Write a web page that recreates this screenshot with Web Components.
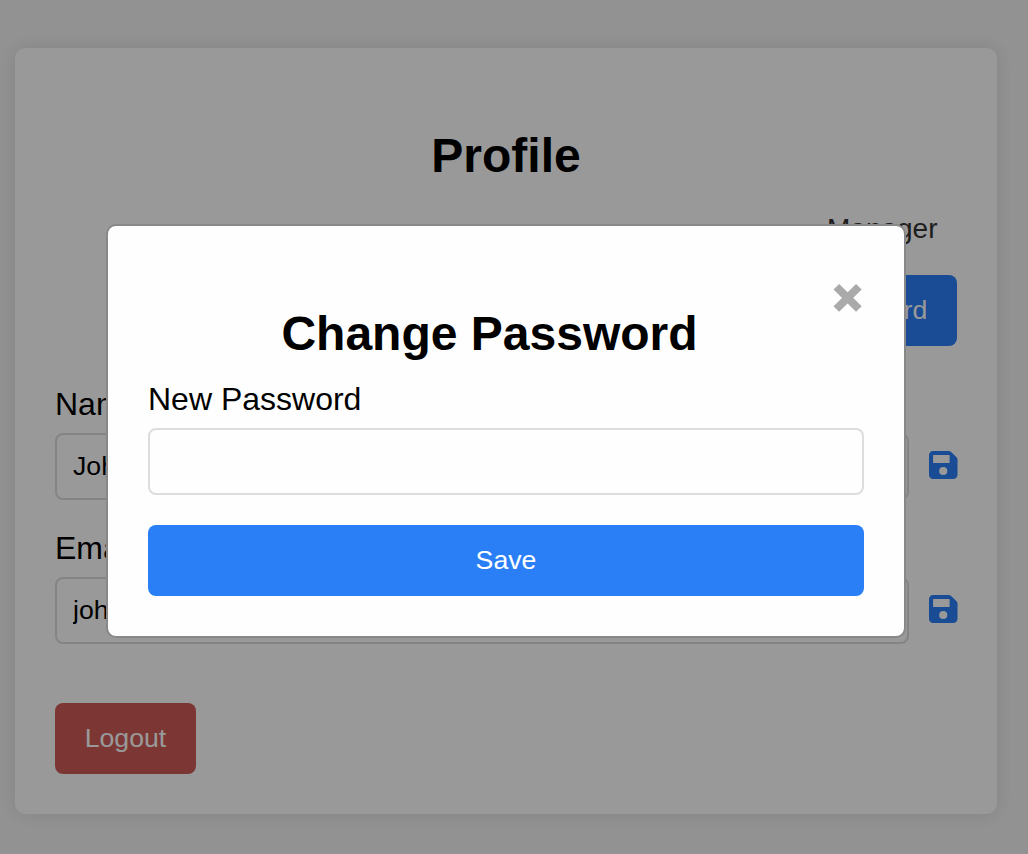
<!DOCTYPE html>
<html lang="en">
<head>
<meta charset="utf-8">
<title>Profile</title>
<style>
html, body { margin: 0; height: 100%; overflow: hidden; }
body { background: #f4f4f4; font-family: "Liberation Sans", Arial, sans-serif; color: #000; }
</style>
</head>
<body>
<profile-card heading="Profile" role-name="Manager">
  <action-button slot="tools">Change Password</action-button>
  <edit-field label="Name" value="John" savable></edit-field>
  <edit-field label="Email" value="john@example.com" savable></edit-field>
  <action-button slot="footer" kind="danger">Logout</action-button>
</profile-card>
<modal-dialog heading="Change Password">
  <edit-field label="New Password" value=""></edit-field>
  <action-button block>Save</action-button>
</modal-dialog>
<script>
class BaseElement extends HTMLElement {
  connectedCallback() {
    if (this.shadowRoot) return;
    this.attachShadow({ mode: "open" }).innerHTML = this.render();
  }
  attr(name) { return this.getAttribute(name) || ""; }
}

customElements.define("save-icon", class extends BaseElement {
  render() {
    return `<style>
      :host { display: block; width: 28.5px; height: 32px; margin: 0 -.7px 4px .2px; color: #2a7ff7; }
      svg { display: block; width: 100%; height: 100%; }
    </style>
    <svg viewBox="0 0 448 512" preserveAspectRatio="none" fill="currentColor" fill-rule="evenodd"><path d="M64 32C28.7 32 0 60.7 0 96v320c0 35.3 28.7 64 64 64h320c35.3 0 64-28.7 64-64V173.3c0-17-6.7-33.3-18.7-45.3L352 50.7C340 38.7 323.7 32 306.7 32H64zM72 96H316a8 8 0 0 1 8 8V216a8 8 0 0 1-8 8H72a8 8 0 0 1-8-8V104a8 8 0 0 1 8-8zM224 288a64 64 0 1 1 0 128 64 64 0 0 1 0-128z"/></svg>`;
  }
});

customElements.define("action-button", class extends BaseElement {
  render() {
    return `<style>
      :host { display: inline-block; }
      :host([block]) { display: block; }
      button { display: block; width: 100%; height: 71px; margin: 0; padding: 0 29.7px; border: 0; border-radius: 8px;
        background: #2a7ff7; color: #fff; font: 26.667px/71px "Liberation Sans", Arial, sans-serif; white-space: nowrap; }
      :host([kind="danger"]) button { background: #cf5c58; }
    </style><button type="button"><slot></slot></button>`;
  }
});

customElements.define("edit-field", class extends BaseElement {
  render() {
    return `<style>
      :host { display: block; }
      label { display: block; font-size: 32px; line-height: 37px; margin-bottom: 10px; }
      .row { display: flex; align-items: center; gap: 20px; }
      input { flex: 1; min-width: 0; box-sizing: border-box; height: 67px; margin: 0; padding: 0 16px; border: 2px solid #ddd;
        border-radius: 8px; background: transparent; color: #000; font: 26.667px "Liberation Sans", Arial, sans-serif; outline: 0; }
    </style>
    <label>${this.attr("label")}</label>
    <div class="row"><input value="${this.attr("value")}">${this.hasAttribute("savable") ? "<save-icon></save-icon>" : ""}</div>`;
  }
});

customElements.define("profile-card", class extends BaseElement {
  render() {
    return `<style>
      :host { display: block; padding: 48px 31px 40px 15px; }
      section { box-sizing: border-box; height: 766px; padding: 80px 40px 40px; border-radius: 10px; background: #fff;
        box-shadow: 0 0 20px rgba(0,0,0,.1); display: flex; flex-direction: column; }
      h2 { margin: 0; text-align: center; font-size: 48px; line-height: 55px; }
      .role { margin: 30px 19.5px 0 0; text-align: right; font-size: 28px; line-height: 32px; color: #333; }
      .tools { margin-top: 30px; display: flex; justify-content: flex-end; }
      .fields { margin-top: 40px; display: grid; gap: 30px; }
      .footer { margin-top: auto; }
    </style>
    <section>
      <h2>${this.attr("heading")}</h2>
      <div class="role">${this.attr("role-name")}</div>
      <div class="tools"><slot name="tools"></slot></div>
      <div class="fields"><slot></slot></div>
      <div class="footer"><slot name="footer"></slot></div>
    </section>`;
  }
});

customElements.define("modal-dialog", class extends BaseElement {
  render() {
    return `<style>
      :host { position: fixed; inset: 0; display: block; background: rgba(0,0,0,.4); }
      .box { box-sizing: border-box; width: 800px; height: 414px; margin: 224px auto 0 106px; padding: 38px 40px;
        border: 2px solid #888; border-radius: 10px; background: #fefefe; }
      header { display: flex; height: 117px; }
      h2 { flex: 1; margin: 42px 0 0; text-align: center; font-size: 48px; line-height: 55px; }
      .close { width: 33px; margin-top: 8px; text-align: center; color: #aaa; font-size: 49px; line-height: 50px; height: 50px;
        font-weight: bold; -webkit-text-stroke: 2.6px #aaa; }
      .body { display: grid; gap: 30px; }
    </style>
    <div class="box" role="dialog">
      <header><h2>${this.attr("heading")}</h2><span class="close">×</span></header>
      <div class="body"><slot></slot></div>
    </div>`;
  }
});
</script>
</body>
</html>
